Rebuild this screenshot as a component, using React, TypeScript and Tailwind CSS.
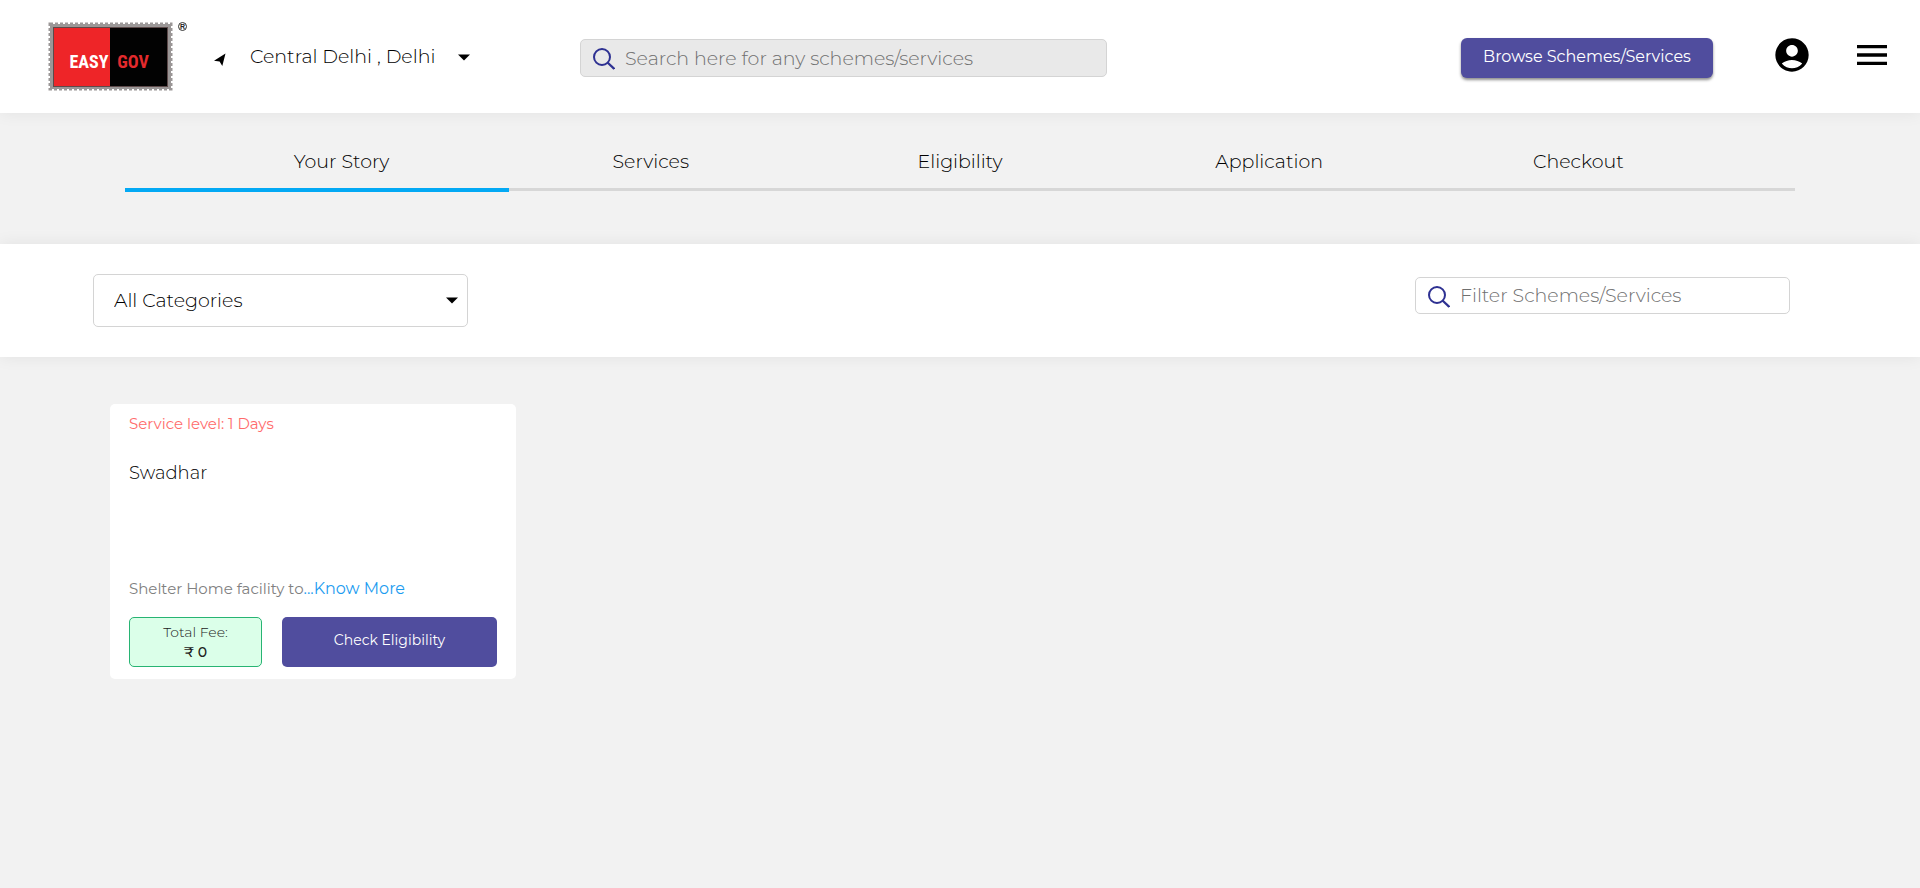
import { MdAccountCircle, MdMenu } from "react-icons/md";

const STEPS = ["Your Story", "Services", "Eligibility", "Application", "Checkout"];

function Logo() {
  return (
    <svg width="142" height="72" viewBox="0 0 142 72" role="img" aria-label="Easy Gov">
      <rect x="2" y="4" width="121" height="65" fill="#9b9797" />
      <rect x="2" y="4" width="121" height="65" fill="none" stroke="#9b9797" strokeWidth="3" strokeDasharray="3 2" />
      <rect x="5" y="7" width="115" height="60" fill="#5d4a4a" />
      <rect x="6" y="8" width="56" height="58" fill="#ee2528" />
      <rect x="62" y="8" width="57" height="58" fill="#020202" />
      <g className="font-['Roboto_Condensed','Roboto',sans-serif] text-[18px] font-bold">
        <text x="41" y="48" textAnchor="middle" fill="#ffffff">EASY</text>
        <text x="85" y="48" textAnchor="middle" fill="#e32a2d">GOV</text>
      </g>
      <circle cx="134.500" cy="6.500" r="4" fill="none" stroke="#333" strokeWidth="1" />
      <text x="134.500" y="9" textAnchor="middle" fill="#222" className="font-['Liberation_Sans',sans-serif] text-[7px] font-bold">R</text>
    </svg>
  );
}

function SearchIcon() {
  return (
    <svg width="22" height="22" viewBox="0 0 22 22" fill="none" stroke="#2e3192" strokeWidth="2" aria-hidden="true" className="shrink-0">
      <circle cx="9" cy="9" r="8" />
      <path d="M14.500 14.500L21.300 21" strokeWidth="2.300" />
    </svg>
  );
}

function Caret() {
  return (
    <svg width="12" height="7" viewBox="0 0 12 7" aria-hidden="true">
      <path d="M0 0.500h12L6 6.500z" fill="#000" />
    </svg>
  );
}

function Header() {
  return (
    <header className="relative flex h-[113px] items-start bg-white pr-7 pl-12 shadow-[0_0_16px_rgba(0,0,0,0.07)]">
      <a href="#home" className="mt-5 shrink-0">
        <Logo />
      </a>
      <button type="button" className="mt-[37px] ml-6 flex h-10 w-64 shrink-0 items-center text-left text-[19px] font-light text-black">
        <svg width="12" height="13" viewBox="0 0 12 13" aria-hidden="true" className="mt-1">
          <path d="M11.500 0.500L0 7.800L5.600 8.600L8.300 13z" fill="#000" />
        </svg>
        <span className="ml-6 whitespace-nowrap">Central Delhi , Delhi</span>
        <span className="ml-auto">
          <Caret />
        </span>
      </button>
      <div className="mt-[39px] ml-[110px] flex h-[38px] w-[527px] items-center gap-2.5 rounded-[5px] border border-[#d4d4d4] bg-[#e9e9e9] px-3 pt-0.5">
        <SearchIcon />
        <input
          type="search"
          aria-label="Search schemes and services"
          placeholder="Search here for any schemes/services"
          className="min-w-0 flex-1 bg-transparent text-[19px] font-light outline-none placeholder:text-[#6f6f6f]"
        />
      </div>
      <div className="mt-[35px] ml-auto flex shrink-0">
        <button type="button" className="mt-[3px] mr-[59px] h-10 w-[252px] rounded-md bg-[#504d9e] pb-0.5 text-base text-white shadow-[0_2px_3px_rgba(0,0,0,0.45)]">
          Browse Schemes/Services
        </button>
        <button type="button" aria-label="Account" className="mr-10 h-10">
          <MdAccountCircle size={40} />
        </button>
        <button type="button" aria-label="Menu" className="h-10">
          <MdMenu size={40} />
        </button>
      </div>
    </header>
  );
}

function Stepper() {
  return (
    <nav aria-label="Progress" className="h-[131px] px-[125px] pt-9">
      <ol className="grid grid-cols-5 px-[62px] text-center text-[19px] leading-[26px] font-light text-black">
        {STEPS.map((step) => (
          <li key={step}>{step}</li>
        ))}
      </ol>
      <div className="mt-[13px] h-[3px] bg-[#d7d7d7]">
        <div className="h-1 w-[23%] bg-[#03a9f4]" />
      </div>
    </nav>
  );
}

function Filters() {
  return (
    <section className="flex h-[113px] items-start justify-between bg-white pr-[130px] pl-[93px] shadow-[0_0_16px_rgba(0,0,0,0.07)]">
      <div className="mt-[30px] grid w-[375px] items-center">
        <select
          aria-label="Category"
          className="col-start-1 row-start-1 h-[53px] w-full appearance-none rounded-[5px] border border-[#d4d4d4] bg-white px-5 pt-0.5 text-[19px] font-light text-black"
        >
          <option>All Categories</option>
        </select>
        <span className="pointer-events-none col-start-1 row-start-1 mr-2.5 justify-self-end">
          <Caret />
        </span>
      </div>
      <div className="mt-[33px] flex h-[37px] w-[375px] items-center gap-2.5 rounded-[5px] border border-[#d4d4d4] bg-white px-3 pt-0.5">
        <SearchIcon />
        <input
          type="search"
          aria-label="Filter schemes and services"
          placeholder="Filter Schemes/Services"
          className="min-w-0 flex-1 bg-transparent text-[19px] font-light outline-none placeholder:text-[#6f6f6f]"
        />
      </div>
    </section>
  );
}

function SchemeCard() {
  return (
    <article className="flex h-[275px] w-[406px] flex-col rounded-[5px] bg-white px-[19px] pt-2 pb-3">
      <p className="text-[15px] leading-6 text-[#ff6b6b]">Service level: 1 Days</p>
      <h2 className="mt-[25px] text-[18px] leading-6 font-light text-black">Swadhar</h2>
      <p className="mt-auto text-[15px] leading-6 text-[#808080]">
        Shelter Home facility to
        <a href="#know-more" className="text-base text-[#1c9cf0]">...Know More</a>
      </p>
      <div className="mt-4 flex gap-5">
        <div className="h-[50px] w-[133px] rounded-[5px] border border-[#27b473] bg-[#dbffe9] pt-1 text-center text-[14px] leading-5 text-[#222]">
          <p className="font-light">Total Fee:</p>
          <p className="font-medium">₹ 0</p>
        </div>
        <button type="button" className="h-[50px] flex-1 rounded-[5px] bg-[#504d9e] pb-1 text-[14px] text-white">
          Check Eligibility
        </button>
      </div>
    </article>
  );
}

export default function App() {
  return (
    <div className="min-h-screen bg-[#f2f2f2] font-['Montserrat',sans-serif]">
      <Header />
      <Stepper />
      <Filters />
      <main className="px-[110px] py-[47px]">
        <SchemeCard />
      </main>
    </div>
  );
}
